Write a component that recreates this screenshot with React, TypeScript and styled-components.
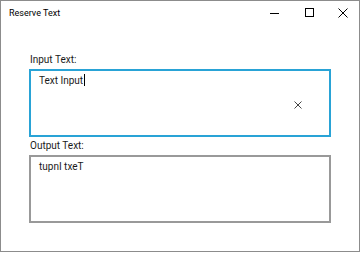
import React from 'react';
import styled, { createGlobalStyle } from 'styled-components';

const GlobalStyle = createGlobalStyle`
  html, body {
    margin: 0;
    padding: 0;
    background: #ffffff;
  }
  * { box-sizing: border-box; }
`;

const Window = styled.div`
  width: 360px;
  height: 252px;
  border: 1px solid #8c8c8c;
  background: #ffffff;
  display: flex;
  flex-direction: column;
  font-family: 'Roboto', 'Noto Sans', sans-serif;
  color: #1a1a1a;
`;

const TitleBar = styled.div`
  height: 23px;
  display: flex;
  align-items: center;
  padding-left: 8px;
`;

const Title = styled.div`
  flex: 1;
  font-size: 9px;
  color: #000;
`;

const CaptionButton = styled.div`
  width: 33px;
  height: 23px;
  display: flex;
  align-items: center;
  justify-content: center;
`;

const Content = styled.div`
  padding: 27px 28px 0 28px;
  display: flex;
  flex-direction: column;
`;

const Label = styled.div`
  font-size: 10px;
  line-height: 14px;
  height: 18px;
  padding: 2px 0 0 1px;
`;

const TextBox = styled.div<{ $focused?: boolean }>`
  position: relative;
  width: 302px;
  height: 68px;
  border: 2px solid ${p => (p.$focused ? '#29a3d6' : '#999999')};
  padding: 3px 8px;
  font-size: 10px;
  line-height: 14px;
`;

const Caret = styled.span`
  display: inline-block;
  width: 1px;
  height: 12px;
  margin-left: 1px;
  background: #000;
  vertical-align: -2px;
`;

const ClearButton = styled.div`
  position: absolute;
  right: 26px;
  top: 29px;
  width: 10px;
  height: 10px;
  display: flex;
  align-items: center;
  justify-content: center;
`;

export default function App() {
  return (
    <>
      <GlobalStyle />
      <Window>
        <TitleBar>
          <Title>Reserve Text</Title>
          <CaptionButton>
            <svg width="10" height="10" viewBox="0 0 10 10" style={{ marginRight: 4 }}>
              <path d="M0 5.5h9" stroke="#000" strokeWidth="1" />
            </svg>
          </CaptionButton>
          <CaptionButton>
            <svg width="10" height="10" viewBox="0 0 10 10">
              <rect x="0.5" y="0.5" width="8" height="8" fill="none" stroke="#000" strokeWidth="1" />
            </svg>
          </CaptionButton>
          <CaptionButton>
            <svg width="10" height="10" viewBox="0 0 10 10">
              <path d="M0.5 0.5l9 9M9.5 0.5l-9 9" stroke="#000" strokeWidth="1" />
            </svg>
          </CaptionButton>
        </TitleBar>
        <Content>
          <Label>Input Text:</Label>
          <TextBox $focused>
            Text Input<Caret />
            <ClearButton>
              <svg width="8" height="8" viewBox="0 0 8 8">
                <path d="M0.5 0.5l7 7M7.5 0.5l-7 7" stroke="#444" strokeWidth="1" />
              </svg>
            </ClearButton>
          </TextBox>
          <Label>Output Text:</Label>
          <TextBox>tupnI txeT</TextBox>
        </Content>
      </Window>
    </>
  );
}
